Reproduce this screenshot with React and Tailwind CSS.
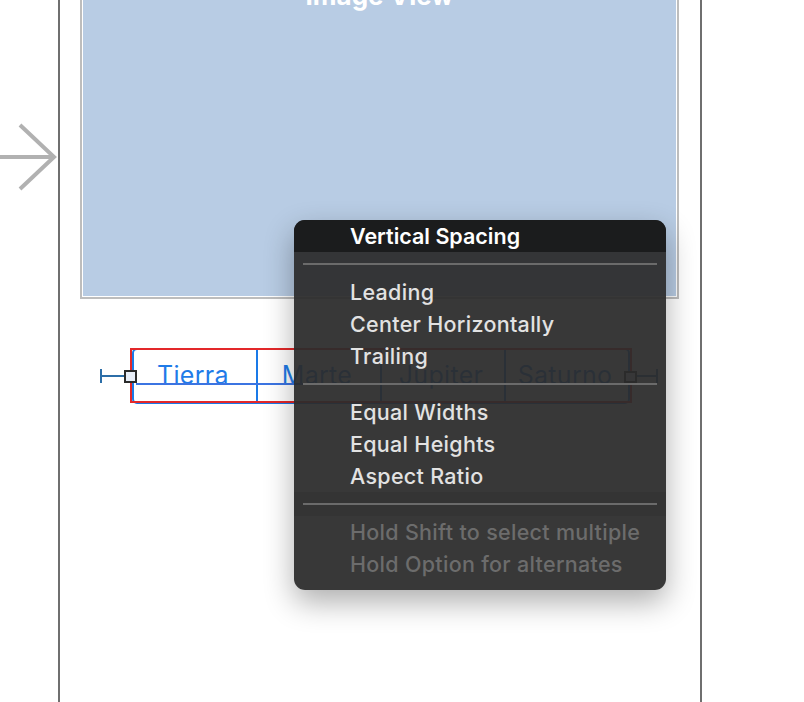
import React from "react";

function Arrow() {
  return (
    <svg width="58" height="72" viewBox="0 0 58 72" className="block">
      <line x1="0" y1="36" x2="53" y2="36" stroke="#b1b1b1" strokeWidth="4" />
      <polyline points="20,4 54,36 20,68" fill="none" stroke="#b1b1b1" strokeWidth="4" />
    </svg>
  );
}

function Segmented() {
  const segs = ["Tierra", "Marte", "Jupiter", "Saturno"];
  return (
    <div className="relative ml-[50px] mt-[49px] w-[502px] h-[57px]">
      <div className="ml-[2px] mt-[1px] w-[498px] h-[56px] flex border-2 border-[#1a7ae8] rounded-[5px] overflow-hidden">
        {segs.map((s, i) => (
          <div
            key={s}
            className={
              "flex-1 flex items-center justify-center text-[25px] text-[#1f7be8] tracking-[0.3px] " +
              (i > 0 ? "border-l-2 border-[#1a7ae8]" : "")
            }
          >
            <span className="-mt-[1px] -ml-[4px]">{s}</span>
          </div>
        ))}
      </div>
      {/* red selection box */}
      <div className="absolute left-0 top-0 w-[502px] h-[55px] border-2 border-[#e3282a]" />
      {/* baseline line */}
      <div className="absolute left-[6px] top-[35px] w-[490px] h-[2px] bg-[#3b74e2]" />
      {/* left constraint */}
      <div className="absolute left-[-30px] top-[21px] w-[2px] h-[14px] bg-[#2c6ea8]" />
      <div className="absolute left-[-29px] top-[27px] w-[23px] h-[2px] bg-[#2c6ea8]" />
      <div className="absolute left-[-6px] top-[22px] w-[13px] h-[13px] border-2 border-[#2b2b2b] bg-[#e8eef8]" />
      {/* right constraint */}
      <div className="absolute left-[494px] top-[23px] w-[13px] h-[12px] border-2 border-[#2b2b2b] bg-[#e8eef8]" />
      <div className="absolute left-[507px] top-[27px] w-[20px] h-[2px] bg-[#2c6ea8]" />
      <div className="absolute left-[526px] top-[21px] w-[2px] h-[14px] bg-[#2c6ea8]" />
    </div>
  );
}

function Sep({ dark }) {
  return (
    <div className={"h-[24px] flex items-center px-[9px] " + (dark ? "bg-[#2f2f2f]/40" : "")}>
      <div className="h-[2px] w-full bg-[#6b6b6b]" />
    </div>
  );
}

function Item({ children, disabled }) {
  return (
    <div
      className={
        "h-[32px] flex items-center pl-[56px] text-[21.5px] font-medium tracking-[0.3px] " +
        (disabled ? "text-[#6c6c6c]" : "text-[#e2e2e2]")
      }
    >
      {children}
    </div>
  );
}

function Menu() {
  return (
    <div className="absolute left-[294px] top-[220px] w-[372px] h-[370px] rounded-[11px] overflow-hidden bg-[rgba(44,44,44,0.94)] shadow-[0_12px_30px_rgba(0,0,0,0.32)] z-10">
      <div className="h-[32px] flex items-center pl-[56px] bg-[#1b1c1d] text-white text-[21.5px] font-semibold">
        Vertical Spacing
      </div>
      <Sep />
      <Item>Leading</Item>
      <Item>Center Horizontally</Item>
      <Item>Trailing</Item>
      <Sep />
      <Item>Equal Widths</Item>
      <Item>Equal Heights</Item>
      <Item>Aspect Ratio</Item>
      <Sep dark />
      <Item disabled>Hold Shift to select multiple</Item>
      <Item disabled>Hold Option for alternates</Item>
    </div>
  );
}

export default function App() {
  return (
    <div className="relative w-[804px] h-[702px] overflow-hidden bg-white font-['Inter',sans-serif]">
      <div className="flex h-full">
        <div className="w-[58px] shrink-0 pt-[121px]">
          <Arrow />
        </div>
        <div className="w-[644px] shrink-0 h-full border-x-2 border-[#6f6f6f] pl-[20px] pr-[21px]">
          <div className="-mt-[40px] h-[339px] border-2 border-[#bdbdbd] p-px bg-white">
            <div className="h-full bg-[#b8cce4] pt-[20px] flex justify-center">
              <span className="text-white font-bold text-[26px] leading-[26px] h-[26px]">Image View</span>
            </div>
          </div>
          <Segmented />
        </div>
      </div>
      <Menu />
    </div>
  );
}
